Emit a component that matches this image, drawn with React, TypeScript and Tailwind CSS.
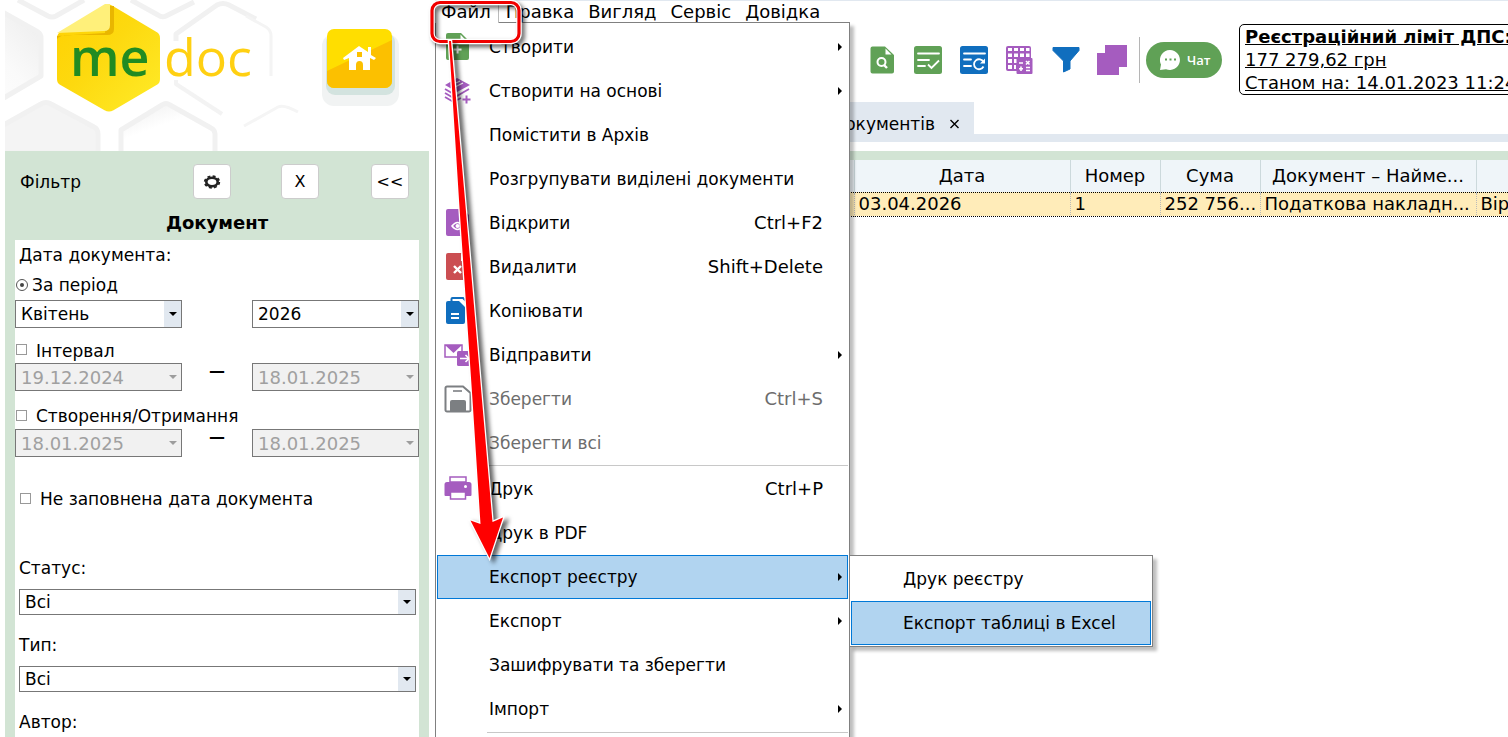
import React, { useState } from "react";
import { clsx } from "clsx";

const GREEN = "#60a156";
const PURPLE = "#a55cbf";
const BLUE = "#106ebe";

/* ---------- icons ---------- */

function Icon({ children }: { children?: React.ReactNode }) {
  return (
    <svg width="28" height="28" viewBox="0 0 28 28" fill="none" aria-hidden="true">
      {children}
    </svg>
  );
}

const CreateIcon = () => (
  <Icon>
    <path d="M5 0H17L25 8V25a2 2 0 0 1-2 2H4a2 2 0 0 1-2-2V2a2 2 0 0 1 2-2Z" fill={GREEN} />
    <path d="M16.500 1.500L23 8.500H16.500Z" fill="#fff" />
    <path d="M13.500 12.500V20.500M9.500 16.500H17.500" stroke="#fff" strokeWidth="2" />
  </Icon>
);

const LayersIcon = () => (
  <Icon>
    <path d="M13 1L26 8L13 15L1 8Z" fill={PURPLE} />
    <path d="M8 8L16 4M11 10L19 6" stroke="#fff" strokeWidth="1.200" />
    <path d="M1 12L13 19L25 12M1 16L13 23L17 21M1 20L13 27" stroke={PURPLE} strokeWidth="1.800" />
    <path d="M22.500 18.500V26.500M18.500 22.500H26.500" stroke={PURPLE} strokeWidth="2" />
  </Icon>
);

const OpenIcon = () => (
  <Icon>
    <path d="M4 0H19L25 6V25a2 2 0 0 1-2 2H4a2 2 0 0 1-2-2V2a2 2 0 0 1 2-2Z" fill={PURPLE} />
    <path d="M8 17Q13.500 10 19 17Q13.500 24 8 17Z" stroke="#fff" strokeWidth="1.600" />
    <circle cx="13.500" cy="17" r="2" fill="#fff" />
  </Icon>
);

const DeleteIcon = () => (
  <Icon>
    <path d="M4 0H17L25 8V25a2 2 0 0 1-2 2H4a2 2 0 0 1-2-2V2a2 2 0 0 1 2-2Z" fill="#cb4e52" />
    <path d="M17 0V8H25Z" fill="#fff" />
    <path d="M10 13L17 20M17 13L10 20" stroke="#fff" strokeWidth="2.400" />
  </Icon>
);

const CopyIcon = () => (
  <Icon>
    <path d="M7.500 4V2a1 1 0 0 1 1-1H19L24 6V22" stroke={BLUE} strokeWidth="2" />
    <path d="M4 4H15L21 10V25a2 2 0 0 1-2 2H4a2 2 0 0 1-2-2V6a2 2 0 0 1 2-2Z" fill={BLUE} />
    <path d="M7 17H15M7 21H15" stroke="#fff" strokeWidth="2" />
  </Icon>
);

const SendIcon = () => (
  <Icon>
    <rect x="1" y="4" width="17" height="12" stroke={PURPLE} strokeWidth="1.500" />
    <path d="M1 4H18L9.500 12Z" fill={PURPLE} />
    <rect x="13" y="10" width="15" height="15" rx="1.500" fill={PURPLE} />
    <path d="M16 17.500H25M21.500 14L25 17.500L21.500 21" stroke="#fff" strokeWidth="1.600" />
  </Icon>
);

const SaveIcon = () => (
  <Icon>
    <path d="M3 1.500H19L26.500 8V25a1.500 1.500 0 0 1-1.500 1.500H3A1.500 1.500 0 0 1 1.500 25V3A1.500 1.500 0 0 1 3 1.500Z" stroke="#7c7f82" strokeWidth="2" />
    <path d="M9 6H18" stroke="#7c7f82" strokeWidth="1.600" />
    <path d="M6 27V17a2 2 0 0 1 2-2H20a2 2 0 0 1 2 2V27Z" fill="#7c7f82" />
  </Icon>
);

const PrintIcon = () => (
  <Icon>
    <rect x="6" y="2" width="16" height="5" stroke={PURPLE} strokeWidth="1.500" />
    <path d="M3 7H25a2.500 2.500 0 0 1 2.500 2.500V20a1 1 0 0 1-1 1H1.500a1 1 0 0 1-1-1V9.500A2.500 2.500 0 0 1 3 7Z" fill={PURPLE} />
    <circle cx="21.500" cy="11.500" r="1.500" fill="#fff" />
    <rect x="6.500" y="17" width="15" height="7" fill="#fff" stroke={PURPLE} strokeWidth="1.500" />
  </Icon>
);

const SearchDocIcon = () => (
  <Icon>
    <path d="M4.500 0.500H17L26 9V25.500a2 2 0 0 1-2 2H4.500a2 2 0 0 1-2-2V2.500a2 2 0 0 1 2-2Z" fill={GREEN} />
    <path d="M17.500 2.500V8.500H23.500Z" fill="#fff" />
    <circle cx="13.500" cy="16" r="4" stroke="#fff" strokeWidth="2" />
    <path d="M16 19L19 22" stroke="#fff" strokeWidth="2.400" />
  </Icon>
);

const CheckListIcon = () => (
  <Icon>
    <rect width="28" height="28" rx="2.500" fill={GREEN} />
    <path d="M4 7.500H25M4 14H15M4 20H11" stroke="#fff" strokeWidth="1.800" strokeLinecap="round" />
    <path d="M14 18.500L17.500 22L25 14.500" stroke="#fff" strokeWidth="1.800" />
  </Icon>
);

const RefreshListIcon = () => (
  <Icon>
    <rect width="28" height="28" rx="2.500" fill={BLUE} />
    <path d="M4 7.500H25M4 13.500H11M4 20H11" stroke="#fff" strokeWidth="1.800" strokeLinecap="round" />
    <path d="M23.500 16A5 5 0 1 0 23.500 20.500" stroke="#fff" strokeWidth="1.800" />
    <path d="M25 12.500V17.500H20Z" fill="#fff" />
  </Icon>
);

const GridCalcIcon = () => (
  <Icon>
    <rect x="0" y="0" width="25" height="25" rx="2" fill={PURPLE} />
    <path
      d="M2 2H6V5H2ZM8 2H12V5H8ZM14 2H18V5H14ZM20 2H23.500V5H20ZM2 7.500H6V11H2ZM8 7.500H12V11H8ZM14 7.500H18V11H14ZM20 7.500H23.500V11H20ZM2 13H6V17H2ZM8 13H11V17H8ZM2 19H6V23H2ZM8 19H10V23H8Z"
      fill="#fff"
    />
    <rect x="10.500" y="12" width="16" height="16" rx="1" fill={PURPLE} />
    <path d="M13 17H17M20 15L23.500 18.500M23.500 15L20 18.500M15 20.500V25M13 22.700H17M20 21.500H24M20 24.500H24" stroke="#fff" strokeWidth="1.600" />
  </Icon>
);

const FunnelIcon = () => (
  <Icon>
    <path d="M1 1.500H27V4.500L18 15V23L11.500 26V15L1 4.500Z" fill={BLUE} stroke={BLUE} strokeLinejoin="round" />
  </Icon>
);

const SquaresIcon = () => (
  <svg width="30" height="30" viewBox="0 0 30 30" aria-hidden="true">
    <path d="M8 0H30V22H22V30H0V8H8Z" fill={PURPLE} />
  </svg>
);

const ChatBubbleIcon = () => (
  <svg width="20" height="20" viewBox="0 0 20 20" aria-hidden="true">
    <path d="M10 0A10 10 0 1 1 6 19.200L0 20L1 14.500A10 10 0 0 1 10 0Z" fill="#fff" />
    <path d="M5 9.500H7M9.500 9.500H11.500M14 9.500H16" stroke={GREEN} strokeWidth="1.800" />
  </svg>
);

const GearIcon = () => (
  <svg width="18" height="14" viewBox="0 0 18 14" aria-hidden="true">
    <ellipse cx="9" cy="7" rx="5.700" ry="4.300" fill="none" stroke="#222" strokeWidth="2.600" />
    <ellipse cx="9" cy="7" rx="7.300" ry="5.800" fill="none" stroke="#222" strokeWidth="1.800" strokeDasharray="2.900 2.300" />
  </svg>
);

/* ---------- logo ---------- */

function Logo() {
  return (
    <svg width="305" height="151" viewBox="5 0 305 151" role="img" aria-label="medoc">
      <defs>
        <linearGradient id="cell" x1="0" y1="1" x2="1" y2="0">
          <stop offset="0" stopColor="#fff" />
          <stop offset="0.500" stopColor="#fafafa" />
          <stop offset="1" stopColor="#ececec" />
        </linearGradient>
        <linearGradient id="shade" x1="0" y1="0" x2="0.700" y2="1">
          <stop offset="0" stopColor="#ececec" />
          <stop offset="0.500" stopColor="#fff" />
        </linearGradient>
        <linearGradient id="gold" x1="0" y1="0" x2="1" y2="1">
          <stop offset="0" stopColor="#ffd000" />
          <stop offset="0.450" stopColor="#fdd90f" />
          <stop offset="1" stopColor="#ffec2a" />
        </linearGradient>
      </defs>
      <g stroke="#f1f1f1" strokeWidth="5" strokeLinejoin="round" fill="none">
        <path d="M-45 34L-3 9L38 32Q41 34 41 38V76L-3 102L-45 78Z" fill="url(#cell)" />
        <path d="M18 0L48 16Q52 18 56 16L84 0" />
        <path d="M131 0L158 15Q162 18 166 16L194 2" />
        <path d="M176 41V34L217 5Q223 2 229 5L256 19" />
        <path d="M246 16L266 27Q271 30 271 36V76" strokeWidth="3" stroke="#f4f4f4" />
        <path d="M176 80V84L222 114" strokeWidth="4" stroke="#f3f3f3" />
        <path d="M0 127L41 104Q46 101 51 104L94 127Q98 129 98 134V153H0Z" fill="#f4f4f4" />
        <path d="M121 153V130L162 105Q166 102 170 105L211 128Q215 130 215 134V153" fill="url(#shade)" />
        <path d="M244 126L278 107Q284 104 298 112" strokeWidth="3" stroke="#f5f5f5" />
      </g>
      <path d="M105 4L60 31Q56 33 56 38V79Q56 84 60 86L104 111Q109 114 114 111L157 86Q161 84 161 79V38Q161 33 157 31L113 5Q109 2 105 4Z" fill="url(#gold)" stroke="#fff" strokeWidth="2" />
      <path d="M114 6V29Q114 35 107 35H69Q60 35 57 39V36L105 33L108 6Z" fill="#e9b600" />
      <path d="M105 4H110V25Q110 31 104 31L57 33Z" fill="#fff07a" />
      <text x="70" y="76" fontSize="52" fontWeight="600" fill="#218b22" fontFamily="'Open Sans', sans-serif">me</text>
      <text x="164" y="76" fontSize="52" fontWeight="500" fill="#ffd012" fontFamily="'Open Sans', sans-serif">doc</text>
    </svg>
  );
}

function HomeButton() {
  return (
    <button className="mt-7 mr-7 h-[78px] w-20" aria-label="Головна">
      <svg width="80" height="78" viewBox="0 0 80 78">
        <rect x="1" y="6" width="77" height="72" rx="12" fill="#f1f3f3" />
        <rect x="5" y="5" width="69" height="62" rx="9" fill="#d3e3df" />
        <rect x="6" y="1" width="65" height="59" rx="7" fill="#ffde00" />
        <path d="M6 43L71 12V53a7 7 0 0 1-7 7H13a7 7 0 0 1-7-7Z" fill="#fcc000" />
        <path d="M22 30L38 18L47 24V19H50V27L55 30L53 32L49 30V42H42V37Q42 33 38.500 33Q35 33 35 37V42H28V30L23 32Z" fill="#fff" />
        <rect x="36" y="24" width="5" height="5" fill="#fcc000" />
      </svg>
    </button>
  );
}

/* ---------- filter panel ---------- */

function Caret({ muted = false }: { muted?: boolean }) {
  return (
    <span
      className={clsx(
        "pointer-events-none absolute top-px right-px bottom-px flex w-[17px] items-center justify-center",
        !muted && "bg-[#e1e8f0]"
      )}
    >
      <svg width="8" height="4" viewBox="0 0 8 4">
        <path d="M0 0H8L4 4Z" fill={muted ? "#9d9d9d" : "#000"} />
      </svg>
    </span>
  );
}

interface DropdownProps {
  label: string;
  options: string[];
  className?: string;
}

function Dropdown({ label, options, className }: DropdownProps) {
  return (
    <div className={clsx("relative", className)}>
      <select aria-label={label} className="h-full w-full appearance-none border border-[#777] bg-white pl-[5px] outline-none">
        {options.map((o) => (
          <option key={o}>{o}</option>
        ))}
      </select>
      <Caret />
    </div>
  );
}

function DateRow({ label, from, to }: { label: string; from: string; to: string }) {
  return (
    <div className="flex justify-between">
      {[from, to].map((value, i) => (
        <React.Fragment key={i}>
          {i === 1 && <span className="text-base/4 font-bold">—</span>}
          <div className="relative h-7 w-[167px]">
            <input
              aria-label={`${label} ${i === 0 ? "з" : "до"}`}
              disabled
              defaultValue={value}
              className="h-full w-full border border-[#777] bg-[#f1f1f1] pl-[5px] text-lg text-[#a0a0a0]"
            />
            <Caret muted />
          </div>
        </React.Fragment>
      ))}
    </div>
  );
}

function Check({ label, className }: { label: string; className?: string }) {
  return (
    <label className={clsx("flex items-center gap-[9px]", className)}>
      <input type="checkbox" className="mb-[2px] size-[11px] appearance-none border border-[#999] bg-white checked:bg-gray-500" />
      {label}
    </label>
  );
}

const panelButton = "flex h-[35px] w-[38px] items-center justify-center rounded border border-[#ccc] bg-white text-base";

function FilterPanel() {
  return (
    <aside className="flex w-[435px] shrink-0 flex-col pr-[6px] pl-[5px]">
      <div className="flex h-[151px] shrink-0 items-start justify-between overflow-hidden">
        <Logo />
        <HomeButton />
      </div>
      <div className="flex grow flex-col bg-[#d2e4d4] px-[10px]">
        <div className="flex items-center pt-[13px] pl-[5px]">
          <span>Фільтр</span>
          <div className="ml-auto flex pr-[10px]">
            <button className={panelButton} aria-label="Налаштування"><GearIcon /></button>
            <button className={clsx(panelButton, "ml-[50px]")}>X</button>
            <button className={clsx(panelButton, "ml-[52px]")}>&lt;&lt;</button>
          </div>
        </div>
        <h2 className="pt-2 pb-px text-center text-lg/8 font-bold">Документ</h2>
        <div className="grow bg-white">
          <p className="pl-1 leading-[30px]">Дата документа:</p>
          <label className="flex h-[30px] items-center gap-1 pl-px">
            <input
              type="radio"
              name="period"
              defaultChecked
              className="flex size-3 appearance-none items-center justify-center rounded-full border border-[#555] before:size-1 before:rounded-full before:bg-[#444]"
            />
            За період
          </label>
          <div className="flex justify-between">
            <Dropdown label="Місяць" options={["Квітень", "Травень"]} className="h-7 w-[167px]" />
            <Dropdown label="Рік" options={["2026", "2025"]} className="h-7 w-[167px]" />
          </div>
          <Check label="Інтервал" className="h-[35px] pt-[10px] pl-px" />
          <DateRow label="Інтервал" from="19.12.2024" to="18.01.2025" />
          <Check label="Створення/Отримання" className="h-[38px] pt-3 pl-px" />
          <DateRow label="Створення/Отримання" from="18.01.2025" to="18.01.2025" />
          <Check label="Не заповнена дата документа" className="mt-7 h-7 pl-[5px]" />
          <div className="mt-[42px] pr-[3px] pl-1">
            <p className="leading-[26px]">Статус:</p>
            <Dropdown label="Статус" options={["Всі"]} className="mt-2 h-[26px]" />
            <p className="mt-[17px] leading-[26px]">Тип:</p>
            <Dropdown label="Тип" options={["Всі"]} className="mt-2 h-[26px]" />
            <p className="mt-[17px] leading-[26px]">Автор:</p>
          </div>
        </div>
      </div>
    </aside>
  );
}

/* ---------- file menu ---------- */

interface MenuEntry {
  label: string;
  icon?: React.ReactNode;
  shortcut?: string;
  submenu?: boolean;
  disabled?: boolean;
  active?: boolean;
}

const topGroup: MenuEntry[] = [
  { label: "Створити", icon: <CreateIcon />, submenu: true },
  { label: "Створити на основі", icon: <LayersIcon />, submenu: true },
  { label: "Помістити в Архів" },
  { label: "Розгрупувати виділені документи" },
  { label: "Відкрити", icon: <OpenIcon />, shortcut: "Ctrl+F2" },
  { label: "Видалити", icon: <DeleteIcon />, shortcut: "Shift+Delete" },
  { label: "Копіювати", icon: <CopyIcon /> },
  { label: "Відправити", icon: <SendIcon />, submenu: true },
  { label: "Зберегти", icon: <SaveIcon />, shortcut: "Ctrl+S", disabled: true },
  { label: "Зберегти всі", disabled: true },
];

const bottomGroup: MenuEntry[] = [
  { label: "Друк", icon: <PrintIcon />, shortcut: "Ctrl+P" },
  { label: "Друк в PDF" },
  { label: "Експорт реєстру", submenu: true, active: true },
  { label: "Експорт", submenu: true },
  { label: "Зашифрувати та зберегти" },
  { label: "Імпорт", submenu: true },
];

function MenuRow({ label, icon, shortcut, submenu, disabled, active }: MenuEntry) {
  return (
    <div className="relative">
      <button
        role="menuitem"
        disabled={disabled}
        className={clsx(
          "flex h-11 w-full items-center border pl-[6px] text-left",
          active ? "border-[#0078d7] bg-[#b1d4f0]" : "border-transparent",
          disabled && "text-[#6d6d6d]"
        )}
      >
        <span className="w-[45px] shrink-0">{icon}</span>
        <span className="grow">{label}</span>
        {shortcut && <span className="pr-6 text-lg">{shortcut}</span>}
        {submenu && (
          <svg width="4" height="8" viewBox="0 0 4 8" className="mr-[5px]">
            <path d="M0 0L4 4L0 8Z" fill="#000" />
          </svg>
        )}
      </button>
      {active && <SubMenu />}
    </div>
  );
}

function SubMenu() {
  const items = ["Друк реєстру", "Експорт таблиці в Excel"];
  const [current] = useState(1);
  return (
    <div role="menu" className="absolute top-0 left-full ml-px w-[304px] border border-[#808080] bg-white p-px shadow-[4px_4px_3px_rgba(0,0,0,0.25)]">
      {items.map((item, i) => (
        <button
          key={item}
          role="menuitem"
          className={clsx(
            "flex h-11 w-full items-center border pl-[51px] text-left whitespace-nowrap",
            i === current ? "border-[#0078d7] bg-[#b1d4f0]" : "border-transparent"
          )}
        >
          {item}
        </button>
      ))}
    </div>
  );
}

function FileMenu() {
  return (
    <div role="menu" className="absolute top-[22px] bottom-0 left-0 z-10 w-[415px] border border-b-0 border-[#808080] bg-white pt-[2px] pr-px pl-px shadow-[4px_4px_3px_rgba(0,0,0,0.25)]">
      {topGroup.map((entry) => (
        <MenuRow key={entry.label} {...entry} />
      ))}
      <hr className="mb-px ml-[50px] border-[#c8c8c8]" />
      {bottomGroup.map((entry) => (
        <MenuRow key={entry.label} {...entry} />
      ))}
      <hr className="mt-px ml-[50px] border-[#c8c8c8]" />
    </div>
  );
}

/* ---------- main area ---------- */

const tools = [
  { name: "Оновити", icon: <RefreshListIcon /> },
  { name: "Пошук", icon: <SearchDocIcon /> },
  { name: "Перевірити", icon: <CheckListIcon /> },
  { name: "Оновити список", icon: <RefreshListIcon /> },
  { name: "Розрахунок", icon: <GridCalcIcon /> },
  { name: "Фільтр", icon: <FunnelIcon /> },
  { name: "Копії", icon: <SquaresIcon /> },
];

function Toolbar() {
  return (
    <div className="flex h-[79px] items-start pl-[378px]">
      <div className="flex h-[74px] shrink-0 items-center">
        {tools.map((tool) => (
          <button key={tool.name} aria-label={tool.name} className="flex w-[46px] justify-center">
            {tool.icon}
          </button>
        ))}
        <span className="ml-1 h-[46px] w-px bg-[#b5b5b5]" />
        <button className="ml-[6px] flex h-9 w-[76px] items-center rounded-full bg-[#60a156] pl-[14px] font-['Open_Sans',sans-serif] text-[13px] font-semibold text-white">
          <ChatBubbleIcon />
          <span className="ml-[7px]">Чат</span>
        </button>
      </div>
      <a href="#limit" className="mt-px ml-[17px] block w-[300px] shrink-0 rounded-[5px] border border-black pl-[5px] text-lg/[23px] whitespace-nowrap underline">
        <b>Реєстраційний ліміт ДПС:</b>
        <br />
        177 279,62 грн
        <br />
        Станом на: 14.01.2023 11:24
      </a>
    </div>
  );
}

const columns = ["", "Дата", "Номер", "Сума", "Документ – Найме...", ""];
const row = ["", "03.04.2026", "1", "252 756...", "Податкова накладн...", "Вір"];

function Registry() {
  return (
    <div className="border-t-[9px] border-[#d2e4d4]">
      <table className="w-full table-fixed border-collapse text-lg/[22px]">
        <colgroup>
          <col className="w-[419px]" />
          <col className="w-[216px]" />
          <col className="w-[90px]" />
          <col className="w-[100px]" />
          <col className="w-[216px]" />
          <col />
        </colgroup>
        <thead>
          <tr className="h-8 bg-[#eff5f9]">
            {columns.map((name, i) => (
              <th key={i} className="border-r border-[#ccd9dc] font-normal whitespace-nowrap last:border-r-0">{name}</th>
            ))}
          </tr>
        </thead>
        <tbody>
          <tr className="h-6 border-y border-dotted border-black bg-[#ffecb9]">
            {row.map((cell, i) => (
              <td key={i} className="border-r border-dotted border-r-[#bbb] pl-1 whitespace-nowrap last:border-r-0">
                {cell}
              </td>
            ))}
          </tr>
        </tbody>
      </table>
    </div>
  );
}

function Annotation() {
  return (
    <svg width="120" height="580" viewBox="425 0 120 580" className="pointer-events-none absolute top-0 -left-[10px] z-30" aria-hidden="true">
      <g style={{ filter: "drop-shadow(3px 3px 2px rgba(0,0,0,0.6))" }}>
        <rect x="432" y="2.500" width="87" height="39" rx="8" fill="none" stroke="#fff" strokeWidth="5.500" />
        <rect x="432" y="2.500" width="87" height="39" rx="8" fill="none" stroke="#f00000" strokeWidth="3.200" />
      </g>
      <path
        d="M449 41L451 41L465 200L482 400L492.500 522L503 517.500L489.500 558L470.500 520.500L480.500 524L472.500 400L459 200Z"
        fill="#f00"
        stroke="#fff"
        strokeWidth="2.600"
        paintOrder="stroke"
        style={{ filter: "drop-shadow(4px 3px 2px rgba(0,0,0,0.6))" }}
      />
    </svg>
  );
}

const menus = ["Файл", "Правка", "Вигляд", "Сервіс", "Довідка"];

export default function App() {
  return (
    <div className="flex h-screen overflow-hidden bg-white font-['DejaVu_Sans',sans-serif] text-[17px]/[22px] text-black">
      <FilterPanel />
      <main className="relative min-w-0 grow">
        <nav className="flex h-[23px] border-t border-[#e1e8f0] text-lg/[22px]">
          {menus.map((name, i) => (
            <button
              key={name}
              className={clsx("h-[22px] px-[7px]", i === 0 && "relative z-20 border-r border-l border-r-[#bbb] border-l-[#ddd] bg-white pl-[5px]")}
            >
              {name}
            </button>
          ))}
        </nav>
        <Toolbar />
        <div className="border-b-8 border-[#e1e8f0]">
          <div className="flex h-8 w-[539px] items-center justify-end bg-[#e1e8f0] pt-3 pr-[14px]">
            <span>документів</span>
            <button aria-label="Закрити" className="ml-[14px]">
              <svg width="11" height="10" viewBox="0 0 11 10">
                <path d="M1.500 1L9.500 9M9.500 1L1.500 9" stroke="#000" strokeWidth="1.400" />
              </svg>
            </button>
          </div>
        </div>
        <div className="pt-[9px]">
          <Registry />
        </div>
        <FileMenu />
        <Annotation />
      </main>
    </div>
  );
}
